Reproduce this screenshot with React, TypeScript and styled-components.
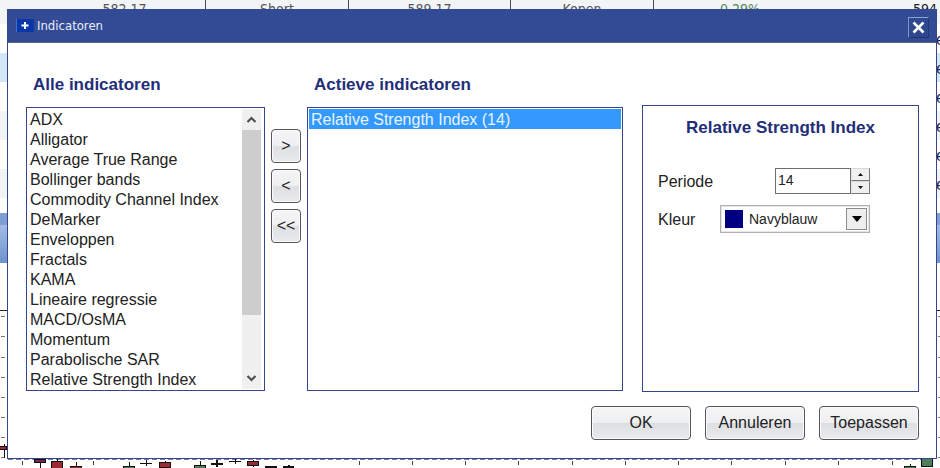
import React, { useState } from "react";
import styled, { createGlobalStyle } from "styled-components";

const NAVY = "#232e78";
const FRAME = "#35458c";
const SANS = `"Liberation Sans", Arial, sans-serif`;
const TAHOMA = `"DejaVu Sans Condensed", "DejaVu Sans", sans-serif`;

const GlobalStyle = createGlobalStyle`
  *, *::before, *::after { box-sizing: border-box; }
  body { margin: 0; background: #fff; color: #222; font-family: ${SANS}; font-size: 16px; overflow: hidden; }
  h1, h2 { margin: 0; }
  button, input, select { font: inherit; color: inherit; margin: 0; }
`;

const Page = styled.div`
  position: relative;
  overflow: hidden;
`;

/* Trading screen behind the dialog */
const Backdrop = styled.div`
  position: absolute;
  inset: 0;
  overflow: hidden;
  display: flex;
  flex-direction: column;
`;

const QuoteRow = styled.div<{ $tone: string }>`
  flex: none;
  display: grid;
  grid-template-columns: 206fr 143fr 162fr 143fr 172fr 114fr;
  height: 29px;
  line-height: 32px;
  background: ${(p) => p.$tone};
  &:first-child { height: 24px; line-height: 19px; font: 14px/19px ${TAHOMA}; }
`;

const QuoteCell = styled.div<{ $up?: boolean; $ruled?: boolean }>`
  white-space: nowrap;
  text-align: center;
  color: ${(p) => (p.$up ? "#4f8a55" : "#55555c")};
  border-right: ${(p) => (p.$ruled ? "1px solid #4a4a52" : "0")};
  &:first-child { padding-left: 44px; }
`;

const LastPrice = styled(QuoteCell)`
  color: #1d1d28;
  text-align: right;
  padding-right: 3px;
`;

const Currency = styled(QuoteCell)`
  grid-column: 6;
  color: #26264a;
  text-align: right;
  margin-right: -5px;
`;

const Ribbon = styled.div`
  flex: none;
  height: 50px;
  margin-top: 15px;
  background: linear-gradient(#7d9fd6 0 12px, #a3bce4 12px, #6d92cf);
`;

const Chart = styled.svg`
  flex: none;
  width: 100%;
  height: 205px;
  display: block;
`;

/* Dialog */
const Dialog = styled.section`
  position: relative;
  margin: 9px 3px 9px 7px;
  background: #fff;
  border: 1px solid ${FRAME};
  border-top: 0;
`;

const TitleBar = styled.header`
  display: flex;
  align-items: center;
  height: 34px;
  padding: 0 7px 0 8px;
  background: #334b94;
  border-bottom: 1px solid #5a6285;
`;

const Title = styled.h1`
  flex: 1;
  margin-left: 3px;
  color: #e8edfb;
  font: 400 13px/18px ${TAHOMA};
`;

const CloseButton = styled.button`
  display: grid;
  place-items: center;
  width: 21px;
  height: 21px;
  margin-top: 3px;
  padding: 0;
  background: #2f478f;
  border: 1px solid;
  border-color: #8ea2d6 #22356f #22356f #7f94cc;
`;

const Columns = styled.div`
  display: grid;
  grid-template-columns: minmax(0, 239fr) 42px minmax(0, 316fr) 19px minmax(0, 277fr);
  padding: 32px 17px 0 18px;
`;

const Heading = styled.h2`
  color: ${NAVY};
  font-size: 17px;
  line-height: 20px;
  font-weight: 700;
`;

const ListHeading = styled(Heading)`
  margin: 0 0 12px 7px;
`;

const ListFrame = styled.div`
  display: flex;
  padding: 1px;
  height: 284px;
  border: 1px solid ${FRAME};
`;

const ListBox = styled.select`
  flex: 1;
  min-width: 0;
  height: 280px;
  padding: 0;
  border: 0;
  outline: 0;
  border-radius: 0;
  background: #fff;
  overflow-y: auto;
  scrollbar-width: none;
  option {
    height: 20px;
    min-height: 20px;
    padding: 2px 2px 0;
    line-height: 18px;
    color: #222;
  }
  option:checked {
    color: #fff;
    -webkit-text-fill-color: #e8f4ff;
    background: #3399ff linear-gradient(#3399ff, #3399ff);
  }
`;

const ScrollTrack = styled.div`
  display: flex;
  flex-direction: column;
  width: 19px;
  margin-right: 2px;
  background: #f0f0f0;
`;

const ScrollArrow = styled.button`
  display: grid;
  place-items: center;
  width: 19px;
  height: 21px;
  padding: 0;
  border: 0;
  background: #f0f0f0;
`;

const ScrollThumb = styled.div`
  height: 185px;
  margin-bottom: auto;
  background: #cdcdcd;
`;

const Movers = styled.div`
  display: flex;
  flex-direction: column;
  gap: 6px;
  padding: 54px 6px 0;
`;

const PushButton = styled.button`
  height: 34px;
  padding: 0;
  border: 1px solid #55565c;
  border-radius: 4px;
  box-shadow: inset 0 0 0 1px #fbfbfc;
  background: linear-gradient(#f5f5f6, #eeeff1 49%, #dedfe2 50%, #e9eaec);
`;

const FooterButton = styled(PushButton)`
  width: 100px;
`;

const Settings = styled.section`
  grid-column: 5;
  min-height: 287px;
  margin-top: 30px;
  padding: 12px 48px 0 15px;
  border: 1px solid ${FRAME};
`;

const SettingsTitle = styled(Heading)`
  margin: 0 -33px 29px 0;
  text-align: center;
`;

const Field = styled.div`
  display: flex;
  align-items: center;
  justify-content: space-between;
  height: 28px;
  margin-bottom: 10px;
`;

const FieldLabel = styled.label`
  padding-top: 2px;
`;

const Spinner = styled.div`
  display: grid;
  grid-template-columns: 76px 19px;
  height: 26px;
`;

const NumberInput = styled.input`
  width: 100%;
  height: 26px;
  padding: 0 0 2px 2px;
  border: 1px solid #6e6e6e;
  border-radius: 0;
  outline: 0;
  font-size: 14px;
  appearance: textfield;
  &::-webkit-inner-spin-button { appearance: none; margin: 0; }
`;

const StepButtons = styled.div`
  display: grid;
  grid-template-rows: 1fr 1fr;
`;

const StepButton = styled.button`
  display: grid;
  place-items: center;
  padding: 0;
  background: #f0f0f0;
  border: 1px solid;
  border-color: #d8d8d8 #777 #777 #e4e4e4;
`;

const ColorPicker = styled.div`
  display: flex;
  align-items: center;
  width: 150px;
  height: 28px;
  padding: 0 2px 0 4px;
  border: 1px solid #b0b0b0;
  box-shadow: inset 0 0 0 1px #e6e6e6;
`;

const Swatch = styled.span<{ $color: string }>`
  width: 18px;
  height: 18px;
  background: ${(p) => p.$color};
`;

const ColorSelect = styled.select`
  flex: 1;
  min-width: 0;
  height: 22px;
  padding: 0 0 0 6px;
  border: 0;
  outline: 0;
  background: transparent;
  appearance: none;
  font-size: 14px;
`;

const DropButton = styled.button`
  display: grid;
  place-items: center;
  width: 21px;
  height: 22px;
  padding: 0;
  border: 1px solid #8c8c8c;
  background: #eee;
`;

const Footer = styled.footer`
  display: flex;
  justify-content: flex-end;
  gap: 14px;
  padding: 14px 17px 18px;
`;

const INDICATORS = [
  "ADX", "Alligator", "Average True Range", "Bollinger bands", "Commodity Channel Index",
  "DeMarker", "Enveloppen", "Fractals", "KAMA", "Lineaire regressie", "MACD/OsMA",
  "Momentum", "Parabolische SAR", "Relative Strength Index",
];

const COLORS: Record<string, string> = { Navyblauw: "#000080", Rood: "#c00000", Groen: "#008000" };

const ROW_TONES = ["#fff", "#d3e7f9", "#fff", "#f1f3f6", "#fff", "#f1f3f6"];

const Y_TICKS = [58, 78, 99, 119, 139, 159, 179, 199];
const X_TICKS = [22, 93, 359, 412, 465, 518, 572, 625, 678, 731, 785, 838, 892];

type Candle = { x: number; top: number; h: number; wick: number; low?: number; fill: string };
const RED = "#9c2a34";
const GREEN = "#4f7f5a";
const CANDLES: Candle[] = [
  { x: 40, top: 459, h: 3, wick: 459, low: 468, fill: "#7b2450" },
  { x: 57, top: 461, h: 7, wick: 459, fill: RED },
  { x: 76, top: 466, h: 4, wick: 462, fill: RED },
  { x: 129, top: 466, h: 4, wick: 462, fill: GREEN },
  { x: 165, top: 462, h: 5, wick: 461, fill: RED },
  { x: 200, top: 465, h: 5, wick: 461, fill: GREEN },
  { x: 253, top: 461, h: 4, wick: 460, low: 467, fill: RED },
  { x: 271, top: 466, h: 3, wick: 466, fill: "#111" },
  { x: 910, top: 466, h: 5, wick: 464, fill: GREEN },
  { x: 927, top: 458, h: 8, wick: 457, low: 467, fill: GREEN },
];

function PriceChart() {
  return (
    <Chart viewBox="0 0 940 205" preserveAspectRatio="xMinYMin slice" shapeRendering="crispEdges" aria-hidden="true">
      <path d="M0 47.500H940" stroke="#222" />
      <path d="M8 196.500H936" stroke="#777da0" strokeDasharray="5 3" />
      {Y_TICKS.map((y) => (
        <path key={y} d={`M1 ${y - 5}h4M938 ${y - 5}h2`} stroke="#777" />
      ))}
      {X_TICKS.map((x) => (
        <path key={x} d={`M${x} 198v4`} stroke="#444" />
      ))}
      <path d="M4.500 181v14" stroke="#111" />
      <rect x="0" y="183" width="7" height="4" fill="#111" />
      <rect x="0" y="184" width="6" height="2" fill={RED} />
      <g transform="translate(0 -263)">
        {CANDLES.map((c) => (
          <g key={c.x} stroke="#111">
            <path d={`M${c.x} ${c.wick}V${c.low ?? 468}`} />
            <rect x={c.x - 6} y={c.top} width="11" height={c.h} fill={c.fill} />
          </g>
        ))}
        <path d="M140 463.500h12M146 460v6M229 461.500h12M235 459v5" stroke="#111" />
        <path d="M211 464h12M217 460v7M283 467h11M289 465v3" stroke="#111" strokeWidth="2" />
      </g>
    </Chart>
  );
}

export default function App() {
  const [period, setPeriod] = useState(14);
  const [color, setColor] = useState("Navyblauw");

  return (
    <Page>
      <GlobalStyle />
      <Backdrop aria-hidden="true">
        <QuoteRow $tone="#f3f4f6">
          <QuoteCell $ruled>582,17</QuoteCell>
          <QuoteCell $ruled>Short</QuoteCell>
          <QuoteCell $ruled>589,17</QuoteCell>
          <QuoteCell $ruled>Kopen</QuoteCell>
          <QuoteCell $up>0.29%</QuoteCell>
          <LastPrice>594</LastPrice>
        </QuoteRow>
        {ROW_TONES.map((tone, i) => (
          <QuoteRow key={i} $tone={tone}>
            <Currency>e</Currency>
          </QuoteRow>
        ))}
        <Ribbon />
        <PriceChart />
      </Backdrop>

      <Dialog role="dialog" aria-labelledby="dialog-title">
        <TitleBar>
          <svg width="18" height="13" viewBox="0 0 18 13" aria-hidden="true">
            <rect width="18" height="13" fill="#0a37a8" />
            <rect width="1" height="13" fill="#3f6fd0" />
            <path d="M5.500 6.500h7M9 3v7" stroke="#fff" strokeWidth="2" />
          </svg>
          <Title id="dialog-title">Indicatoren</Title>
          <CloseButton type="button" aria-label="Sluiten">
            <svg width="13" height="13" viewBox="0 0 13 13" aria-hidden="true">
              <path d="M1.500 1.500l10 10M11.500 1.500l-10 10" stroke="#fff" strokeWidth="2.600" />
            </svg>
          </CloseButton>
        </TitleBar>

        <Columns>
          <div>
            <ListHeading id="all-label">Alle indicatoren</ListHeading>
            <ListFrame>
              <ListBox size={14} aria-labelledby="all-label">
                {INDICATORS.map((name) => (
                  <option key={name}>{name}</option>
                ))}
              </ListBox>
              <ScrollTrack>
                <ScrollArrow type="button" aria-label="Omhoog">
                  <svg width="11" height="9" viewBox="0 0 11 9"><path d="M1.500 7l4-4 4 4" fill="none" stroke="#505050" strokeWidth="2.200" /></svg>
                </ScrollArrow>
                <ScrollThumb />
                <ScrollArrow type="button" aria-label="Omlaag">
                  <svg width="11" height="9" viewBox="0 0 11 9"><path d="M1.500 2l4 4 4-4" fill="none" stroke="#505050" strokeWidth="2.200" /></svg>
                </ScrollArrow>
              </ScrollTrack>
            </ListFrame>
          </div>

          <Movers>
            <PushButton type="button" aria-label="Toevoegen">&gt;</PushButton>
            <PushButton type="button" aria-label="Verwijderen">&lt;</PushButton>
            <PushButton type="button" aria-label="Alles verwijderen">&lt;&lt;</PushButton>
          </Movers>

          <div>
            <ListHeading id="active-label">Actieve indicatoren</ListHeading>
            <ListFrame>
              <ListBox size={14} defaultValue="rsi" aria-labelledby="active-label">
                <option value="rsi">Relative Strength Index ({period})</option>
              </ListBox>
            </ListFrame>
          </div>

          <Settings>
            <SettingsTitle>Relative Strength Index</SettingsTitle>
            <Field>
              <FieldLabel htmlFor="period">Periode</FieldLabel>
              <Spinner>
                <NumberInput id="period" type="number" value={period} onChange={(e) => setPeriod(Number(e.target.value))} />
                <StepButtons>
                  <StepButton type="button" aria-label="Meer" onClick={() => setPeriod(period + 1)}>
                    <svg width="5" height="3" viewBox="0 0 5 3"><path d="M0 3l2.500-3L5 3z" fill="#111" /></svg>
                  </StepButton>
                  <StepButton type="button" aria-label="Minder" onClick={() => setPeriod(period - 1)}>
                    <svg width="5" height="3" viewBox="0 0 5 3"><path d="M0 0l2.500 3L5 0z" fill="#111" /></svg>
                  </StepButton>
                </StepButtons>
              </Spinner>
            </Field>
            <Field>
              <FieldLabel htmlFor="color">Kleur</FieldLabel>
              <ColorPicker>
                <Swatch $color={COLORS[color]} />
                <ColorSelect id="color" value={color} onChange={(e) => setColor(e.target.value)}>
                  {Object.keys(COLORS).map((name) => (
                    <option key={name}>{name}</option>
                  ))}
                </ColorSelect>
                <DropButton type="button" aria-label="Kleur kiezen">
                  <svg width="10" height="6" viewBox="0 0 10 6"><path d="M0 0h10L5 6z" fill="#000" /></svg>
                </DropButton>
              </ColorPicker>
            </Field>
          </Settings>
        </Columns>

        <Footer>
          <FooterButton type="button">OK</FooterButton>
          <FooterButton type="button">Annuleren</FooterButton>
          <FooterButton type="button">Toepassen</FooterButton>
        </Footer>
      </Dialog>
    </Page>
  );
}
